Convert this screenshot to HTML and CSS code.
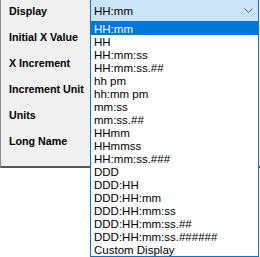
FILE: index.html
```html
<!DOCTYPE html>
<html>
<head>
<meta charset="utf-8">
<link rel="stylesheet" href="styles.css">
</head>
<body>
<div class="panel">
  <div class="labels">
    <div class="label">Display</div>
    <div class="label">Initial X Value</div>
    <div class="label">X Increment</div>
    <div class="label">Increment Unit</div>
    <div class="label">Units</div>
    <div class="label">Long Name</div>
  </div>
  <div class="field">
    <div class="combo">
      <span class="combo-text">HH:mm</span>
      <svg class="chev" width="9" height="5" viewBox="0 0 9 5"><path d="M0.5 0.5 L4.5 4.5 L8.5 0.5" fill="none" stroke="#5f5f5f" stroke-width="1"/></svg>
    </div>
    <ul class="list">
      <li class="item selected">HH:mm</li>
      <li class="item">HH</li>
      <li class="item">HH:mm:ss</li>
      <li class="item">HH:mm:ss.##</li>
      <li class="item">hh pm</li>
      <li class="item">hh:mm pm</li>
      <li class="item">mm:ss</li>
      <li class="item">mm:ss.##</li>
      <li class="item">HHmm</li>
      <li class="item">HHmmss</li>
      <li class="item">HH:mm:ss.###</li>
      <li class="item">DDD</li>
      <li class="item">DDD:HH</li>
      <li class="item">DDD:HH:mm</li>
      <li class="item">DDD:HH:mm:ss</li>
      <li class="item">DDD:HH:mm:ss.##</li>
      <li class="item">DDD:HH:mm:ss.######</li>
      <li class="item">Custom Display</li>
    </ul>
  </div>
</div>
</body>
</html>
```
FILE: styles.css
```css
html, body {
  margin: 0;
  padding: 0;
  background: #ffffff;
  width: 260px;
  height: 257px;
  overflow: hidden;
  font-family: "Liberation Sans", Arial, sans-serif;
}
.panel {
  display: flex;
  width: 260px;
  height: 166px;
  background: #f0f0f0;
  border-left: 1px solid #8a8a8a;
  border-bottom: 2px solid #555555;
  box-sizing: content-box;
}
.labels {
  width: 81px;
  padding-left: 8px;
  display: flex;
  flex-direction: column;
  gap: 4px;
}
.label {
  height: 22px;
  line-height: 22px;
  font-size: 10.7px;
  font-weight: bold;
  color: #000;
  white-space: nowrap;
}
.field {
  position: relative;
  width: 169px;
}
.combo {
  box-sizing: border-box;
  height: 22px;
  background: #cce4f7;
  border: 1px solid #0078d7;
  border-top: none;
  display: flex;
  align-items: center;
  justify-content: space-between;
  padding: 1px 3px 0 3px;
  font-size: 11.5px;
  color: #000;
}
.chev {
  margin-right: 2px;
  margin-top: -1px;
}
.list {
  position: absolute;
  left: 0;
  top: 22px;
  width: 169px;
  box-sizing: border-box;
  margin: 0;
  padding: 0;
  list-style: none;
  background: #fff;
  border: 1px solid #0078d7;
  border-top: none;
}
.item {
  height: 13px;
  line-height: 13px;
  padding: 1px 0 0 3px;
  box-sizing: border-box;
  font-size: 11.5px;
  color: #000;
  white-space: nowrap;
}
.item.selected {
  background: #0078d7;
  color: #fff;
}
```
